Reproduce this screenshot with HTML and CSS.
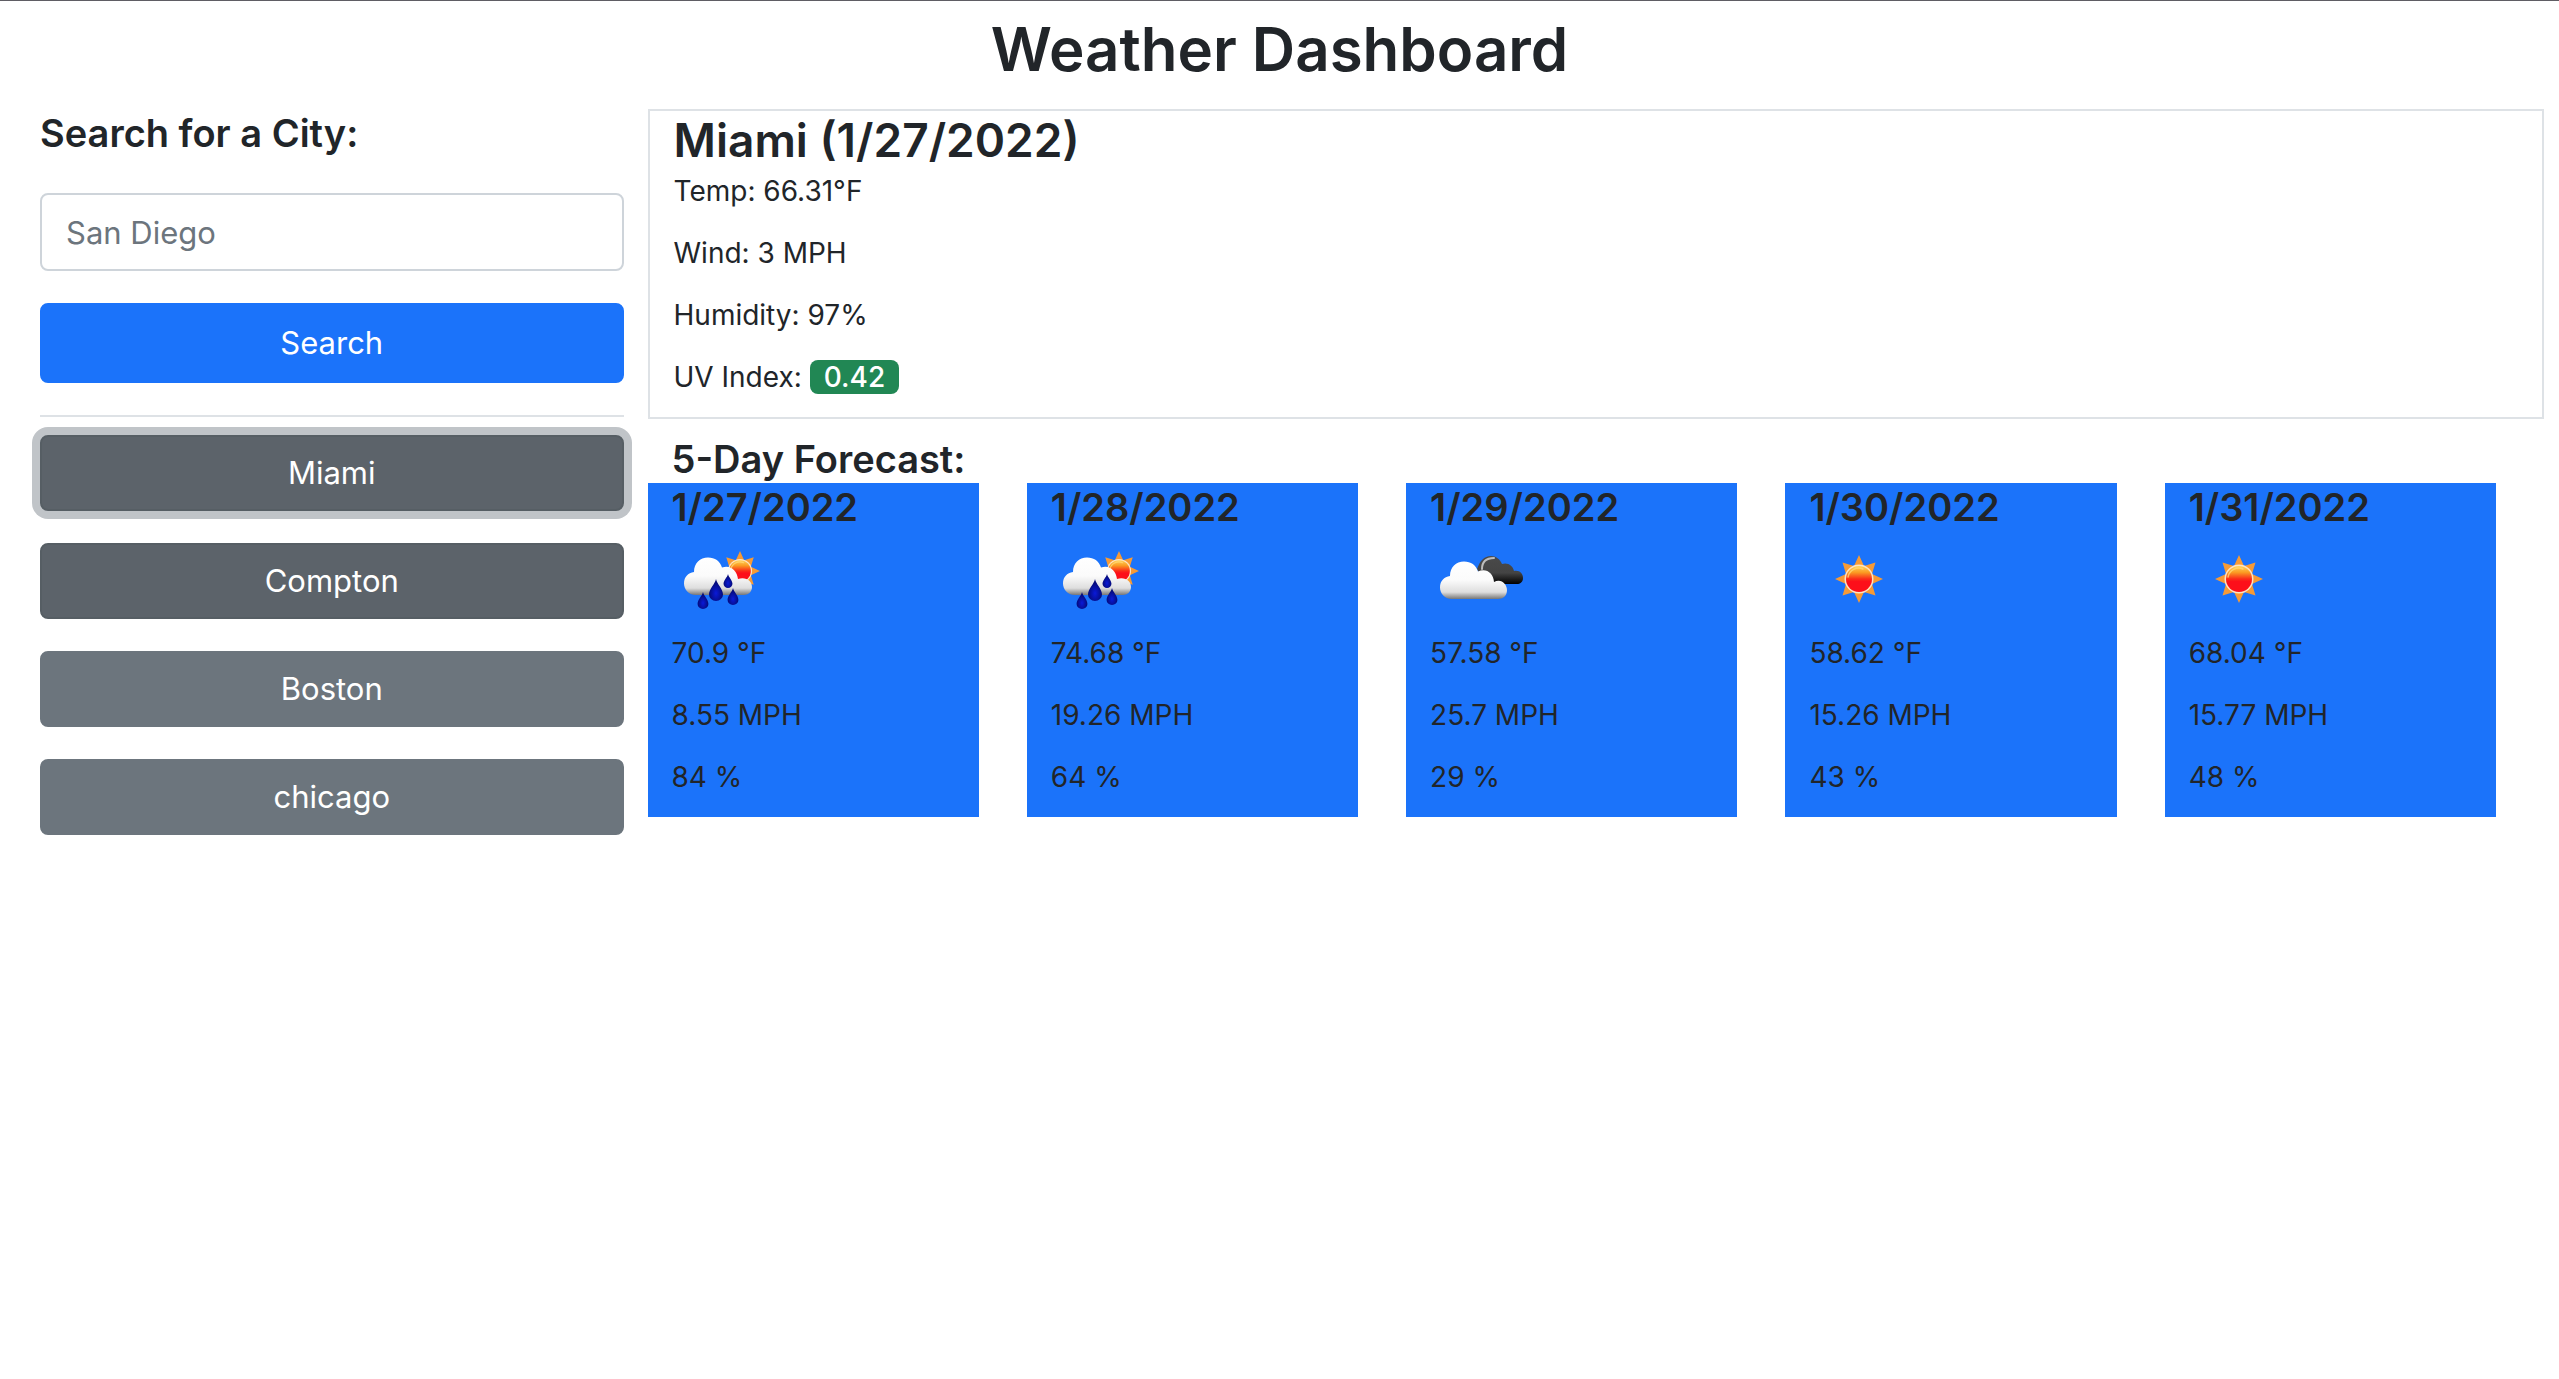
FILE: index.html
```html
<!DOCTYPE html>
<html lang="en">
<head>
<meta charset="utf-8">
<meta name="viewport" content="width=device-width, initial-scale=1">
<title>Weather Dashboard</title>
<link rel="stylesheet" href="styles.css">
</head>
<body>
<svg class="sprite" aria-hidden="true">
  <defs>
    <linearGradient id="disc" x1="0" y1="0" x2="0" y2="1">
      <stop offset="0" stop-color="#ffd45c"/>
      <stop offset="0.25" stop-color="#fb9a22"/>
      <stop offset="0.5" stop-color="#fa2a1a"/>
      <stop offset="0.6" stop-color="#fd0f1a"/>
      <stop offset="1" stop-color="#fd0f1a"/>
    </linearGradient>
    <linearGradient id="white-cloud" gradientUnits="userSpaceOnUse" x1="0" y1="26" x2="0" y2="64">
      <stop offset="0" stop-color="#fff"/>
      <stop offset="0.5" stop-color="#fbfbfb"/>
      <stop offset="0.82" stop-color="#dedede"/>
      <stop offset="1" stop-color="#777"/>
    </linearGradient>
    <linearGradient id="dark-cloud" gradientUnits="userSpaceOnUse" x1="0" y1="25" x2="0" y2="53">
      <stop offset="0" stop-color="#4a4a4a"/>
      <stop offset="0.6" stop-color="#444"/>
      <stop offset="1" stop-color="#000"/>
    </linearGradient>
    <radialGradient id="drop-fill" cx="0.5" cy="0.65" r="0.5">
      <stop offset="0" stop-color="#0a1ad8"/>
      <stop offset="1" stop-color="#040a78"/>
    </radialGradient>
    <symbol id="sun" viewBox="-24 -24 48 48">
      <path fill="#f79a35" d="M0-24 5-13 16.500-16.500 13-5 24 0 13 5 16.500 16.500 5 13 0 24-5 13-16.500 16.500-13 5-24 0-13-5-16.500-16.500-5-13Z"/>
      <circle r="14.500" fill="#fde3c4"/>
      <circle r="13" fill="url(#disc)"/>
      <path d="M-11-2A11 11 0 0 1 4-10" fill="none" stroke="#ffd873" stroke-width="1.500" stroke-linecap="round" opacity="0.8"/>
    </symbol>
    <symbol id="drop" viewBox="0 0 14 22">
      <path fill="url(#drop-fill)" d="M7 0C8 5 14 10 14 15.500A7 6.500 0 0 1 0 15.500C0 10 6 5 7 0Z"/>
    </symbol>
    <symbol id="rain" viewBox="0 0 100 96">
      <use href="#sun" x="48" y="20" width="40" height="40"/>
      <path fill="url(#white-cloud)" d="M24 64C16 64 12 58 12 52.500C12 46 16 42 22 41C22 32 28 26.500 36 26.500C43 26.500 48 30 50 36.500C58 33.500 65 39 66 48C74 45.500 80 50 80 56C80 61 76 64 72 64Z"/>
      <use href="#drop" x="25" y="61" width="12" height="17"/>
      <use href="#drop" x="37" y="48" width="14" height="22"/>
      <use href="#drop" x="51" y="43" width="10" height="14"/>
      <use href="#drop" x="55" y="57" width="12" height="17"/>
    </symbol>
    <symbol id="clouds" viewBox="0 0 100 96">
      <path fill="url(#dark-cloud)" d="M56 53L47 38C50 30 54 25 61 25C66 25 70 28 72 33C78 31 83 35 84 40C90 39 93 43 93 47C93 51 90 53 87 53Z"/>
      <path fill="none" stroke="#bdbdbd" stroke-width="2" d="M52 38C52 31 56 27 64 27" stroke-linecap="round"/>
      <g transform="translate(-2 4)">
        <path fill="url(#white-cloud)" d="M24 64C16 64 12 58 12 52.500C12 46 16 42 22 41C22 32 28 26.500 36 26.500C43 26.500 48 30 50 36.500C58 32.500 65.500 38 66 47C73 43 79 49 79 55C79 61 75 64 70 64Z"/>
      </g>
    </symbol>
    <symbol id="clear" viewBox="0 0 100 96">
      <use href="#sun" x="26" y="24" width="48" height="48"/>
    </symbol>
  </defs>
</svg>

<header class="page-header">
  <h1>Weather Dashboard</h1>
</header>

<div class="layout">
  <aside class="sidebar">
    <form class="search">
      <label class="subtitle" for="city">Search for a City:</label>
      <input class="search-input" id="city" type="text" placeholder="San Diego">
      <button class="btn btn-primary" type="button">Search</button>
    </form>
    <div class="history">
      <button class="btn btn-active btn-focus" type="button">Miami</button>
      <button class="btn btn-active" type="button">Compton</button>
      <button class="btn" type="button">Boston</button>
      <button class="btn" type="button">chicago</button>
    </div>
  </aside>

  <main>
    <section class="current">
      <h2>Miami (1/27/2022)</h2>
      <div class="readings">
        <p>Temp: 66.31°F</p>
        <p>Wind: 3 MPH</p>
        <p>Humidity: 97%</p>
        <p>UV Index: <span class="badge">0.42</span></p>
      </div>
    </section>

    <h3 class="subtitle forecast-title">5-Day Forecast:</h3>
    <section class="forecast">
      <article class="card">
        <h3 class="subtitle">1/27/2022</h3>
        <svg class="icon" role="img" aria-label="Rain"><use href="#rain"/></svg>
        <div class="readings"><p>70.9 °F</p><p>8.55 MPH</p><p>84 %</p></div>
      </article>
      <article class="card">
        <h3 class="subtitle">1/28/2022</h3>
        <svg class="icon" role="img" aria-label="Rain"><use href="#rain"/></svg>
        <div class="readings"><p>74.68 °F</p><p>19.26 MPH</p><p>64 %</p></div>
      </article>
      <article class="card">
        <h3 class="subtitle">1/29/2022</h3>
        <svg class="icon" role="img" aria-label="Clouds"><use href="#clouds"/></svg>
        <div class="readings"><p>57.58 °F</p><p>25.7 MPH</p><p>29 %</p></div>
      </article>
      <article class="card">
        <h3 class="subtitle">1/30/2022</h3>
        <svg class="icon" role="img" aria-label="Clear"><use href="#clear"/></svg>
        <div class="readings"><p>58.62 °F</p><p>15.26 MPH</p><p>43 %</p></div>
      </article>
      <article class="card">
        <h3 class="subtitle">1/31/2022</h3>
        <svg class="icon" role="img" aria-label="Clear"><use href="#clear"/></svg>
        <div class="readings"><p>68.04 °F</p><p>15.77 MPH</p><p>48 %</p></div>
      </article>
    </section>
  </main>
</div>
</body>
</html>
```
FILE: styles.css
```css
*,
*::before,
*::after {
  box-sizing: border-box;
}

:root {
  --blue: #1b73fa;
  --text: #212529;
  --line: #dee2e6;
}

body {
  margin: 0;
  background: #fff;
  color: var(--text);
  font-family: Inter, "Liberation Sans", sans-serif;
  font-size: 28px;
  line-height: 44px;
}

h1,
h2,
h3,
p {
  margin: 0;
}

h1,
h2,
.subtitle {
  font-weight: 600;
}

h1 {
  font-size: 60px;
  line-height: 76px;
  text-align: center;
}

h2 {
  font-size: 46px;
  line-height: 58px;
}

.subtitle {
  font-size: 38px;
  line-height: 48px;
}

/* Kept rendered at zero size so that its gradients stay usable */
.sprite {
  position: absolute;
  width: 0;
  height: 0;
}

.page-header {
  padding: 10px 0 22px;
  border-top: 1px solid #5f5d64;
}

.layout {
  display: grid;
  grid-template-columns: minmax(0, 4fr) minmax(0, 13fr);
  align-items: start;
  gap: 24px;
  padding: 0 15px 0 40px;
}

.search {
  display: flex;
  flex-direction: column;
  padding-bottom: 32px;
  border-bottom: 2px solid var(--line);
}

.search-input {
  width: 100%;
  height: 78px;
  margin: 36px 0 32px;
  padding: 0 24px;
  border: 2px solid #ced4da;
  border-radius: 8px;
  background: #fff;
  color: var(--text);
  font: inherit;
  font-size: 31px;
}

.search-input::placeholder {
  color: #6c757d;
  opacity: 1;
}

.history {
  display: flex;
  flex-direction: column;
  gap: 32px;
  padding-top: 18px;
}

.btn {
  height: 76px;
  padding: 0 24px;
  border: 2px solid #6c757d;
  border-radius: 8px;
  background: #6c757d;
  color: #fff;
  font: inherit;
  font-size: 31px;
  cursor: pointer;
}

.btn-primary {
  height: 80px;
  border-color: var(--blue);
  background: var(--blue);
}

.btn-active {
  border-color: #565e64;
  background: #5c636a;
}

.btn-focus {
  box-shadow: 0 0 0 8px #c0c4c8;
}

.current {
  padding: 0 24px 18px;
  border: 2px solid var(--line);
}

.readings {
  display: flex;
  flex-direction: column;
  gap: 18px;
}

.badge {
  display: inline-block;
  padding: 0 14px;
  border-radius: 8px;
  background: #218754;
  color: #fff;
  font-weight: 500;
  line-height: 34px;
}

.forecast-title {
  padding: 16px 24px 0;
}

.forecast {
  display: grid;
  grid-template-columns: repeat(5, minmax(0, 1fr));
  gap: 48px;
  padding-right: 48px;
}

.card {
  padding: 0 24px 18px;
  background: var(--blue);
}

.icon {
  display: block;
  width: 100px;
  height: 96px;
  margin-bottom: 4px;
}
```
